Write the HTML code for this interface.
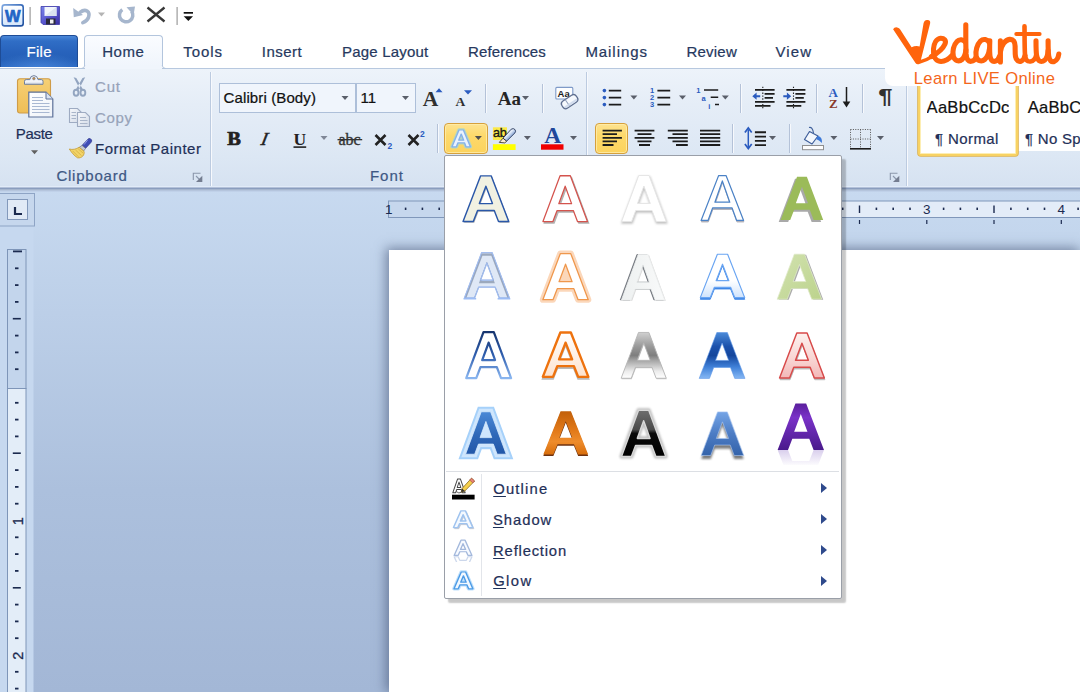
<!DOCTYPE html>
<html>
<head>
<meta charset="utf-8">
<title>Word</title>
<style>
*{box-sizing:border-box;margin:0;padding:0}
html,body{width:1080px;height:692px;overflow:hidden;background:#fff}
body{font-family:"Liberation Sans",sans-serif;font-size:15px;color:#1e2f57;position:relative}
.abs{position:absolute}
.t{position:absolute;white-space:nowrap;font-size:15px;line-height:18px;color:#1f3058;-webkit-text-stroke:.22px currentColor}
.t u{text-decoration-thickness:1.2px;text-underline-offset:2px}
#titlebar{left:0;top:0;width:1080px;height:35px;background:#fff}
#tabrow{left:0;top:35px;width:1080px;height:34px;background:#fff;border-bottom:1px solid #b7c8df}
#filetab{left:0;top:35px;width:78px;height:32px;border-radius:4px 4px 0 0;background:radial-gradient(ellipse 60% 50% at 50% 105%,rgba(90,150,230,.55),rgba(90,150,230,0) 100%),linear-gradient(#4b88d8 0%,#306ec6 16%,#2863bc 50%,#2560b8 75%,#2a68c2 100%);border:1px solid #1e4c96;border-bottom:none}
#hometab{left:84.3px;top:35.2px;width:78.4px;height:31px;border-radius:4px 4px 0 0;background:linear-gradient(#fafcff,#f0f5fc);border:1px solid #b3c5dd;border-bottom:none}
#ribbon{left:0;top:69px;width:1080px;height:118px;background:linear-gradient(#edf3fa 0%,#e5edf7 30%,#dce7f4 75%,#d6e2f1 100%);border-bottom:none}
.gsep{top:72px;width:2px;height:115px;background:linear-gradient(90deg,#bccbe0 0 1px,#f7f9fd 1px 2px)}
.isep{width:2px;height:29px;background:linear-gradient(90deg,#b4c2d8 0 1px,#f7f9fd 1px 2px)}
.dis{color:#8c98ae}
#work{left:0;top:187px;width:1080px;height:505px;background:linear-gradient(#c8daf0 0%,#bccfe8 25%,#acc0dd 60%,#a3b7d6 100%)}
#page{left:389px;top:250px;width:691px;height:442px;background:#fff;box-shadow:-2px -1px 11px 1px rgba(60,75,108,.58)}
#popup{left:444.2px;top:154.6px;width:397.4px;height:444px;background:#fff;border:1px solid #9a9fa8;border-radius:2px;box-shadow:4px 4px 1.6px rgba(0,0,0,.22)}
.arr{left:821px;width:0;height:0;border-left:6px solid #2f4a8c;border-top:5px solid transparent;border-bottom:5px solid transparent}
.combo{top:83px;height:30px;background:#f0f5fc;border:1px solid #adbfd9}
.hot{background:linear-gradient(#fde391 0%,#fdd96b 40%,#fcd35e 100%);border:1.3px solid #d6a03c;border-radius:4px;box-shadow:inset 0 0 0 1px rgba(255,238,170,.8)}
svg{position:absolute;left:0;top:0;overflow:visible}
</style>
</head>
<body>
<div id="titlebar" class="abs"></div>
<div id="tabrow" class="abs"></div>
<div id="ribbon" class="abs"></div>
<div id="filetab" class="abs"></div>
<div id="hometab" class="abs"></div>
<div class="abs" style="left:85.3px;top:66px;width:76.4px;height:3.2px;background:#f0f5fc"></div>
<svg width="1080" height="692" viewBox="0 0 1080 692"><path d="M81.3,68.5 Q84.8,68.5 84.8,65 M162.2,65 Q162.2,68.5 165.7,68.5" fill="none" stroke="#b3c5dd" stroke-width="1"/></svg>

<div class="abs gsep" style="left:210.3px"></div>
<div class="abs gsep" style="left:586.3px"></div>
<div class="abs gsep" style="left:906.3px"></div>

<div class="abs combo" style="left:219px;width:137px"></div>
<div class="abs combo" style="left:356px;width:60px"></div>

<div class="abs isep" style="left:485px;top:84px"></div>
<div class="abs isep" style="left:542px;top:84px"></div>
<div class="abs isep" style="left:437px;top:124px"></div>
<div class="abs isep" style="left:740px;top:84px"></div>
<div class="abs isep" style="left:816px;top:84px"></div>
<div class="abs isep" style="left:862px;top:84px"></div>
<div class="abs isep" style="left:732px;top:124px"></div>
<div class="abs isep" style="left:789px;top:124px"></div>

<div class="abs hot" style="left:444px;top:123px;width:44px;height:31px"></div>
<div class="abs hot" style="left:595.3px;top:123px;width:32.4px;height:31px"></div>

<!-- styles gallery -->
<div class="abs" style="left:918px;top:80px;width:162px;height:71px;background:#fff"></div>
<div class="abs" style="left:918.4px;top:80px;width:99.4px;height:76px;border:2.6px solid #f8d263;border-radius:3px;background:#fff;box-shadow:inset 0 0 0 1px #fdeeb4,0 0 0 .8px #ddb252"></div>

<div id="work" class="abs"></div>
<div id="page" class="abs"></div>
<svg width="1080" height="692" viewBox="0 0 1080 692">
<defs>
<linearGradient id="gW" x1="0" y1="0" x2="0" y2="1"><stop offset="0" stop-color="#ffffff"/><stop offset="1" stop-color="#d4e6fb"/></linearGradient>
<linearGradient id="gSave" x1="0" y1="0" x2="1" y2="1"><stop offset="0" stop-color="#7a86ea"/><stop offset=".5" stop-color="#5a58d0"/><stop offset="1" stop-color="#3a2fa0"/></linearGradient>
<linearGradient id="gBoard" x1="0" y1="0" x2="0" y2="1"><stop offset="0" stop-color="#f6d075"/><stop offset="1" stop-color="#efbe56"/></linearGradient>
<linearGradient id="gPaper" x1="0" y1="0" x2="1" y2="1"><stop offset="0" stop-color="#ffffff"/><stop offset="1" stop-color="#eef2f8"/></linearGradient>
<path id="tri" d="M0,0 L7,0 L3.5,4 Z"/>
<path id="Ag" d="M0,46 L17.5,0 L28.5,0 L46,46 L35,46 L31.2,35 L14.8,35 L11,46 Z M23,11 L16.8,28 L29.2,28 Z" fill-rule="evenodd"/>
<filter id="fGlowS" x="-30%" y="-30%" width="160%" height="160%"><feGaussianBlur stdDeviation="0.9"/></filter>
</defs>

<!-- ===== QAT ===== -->
<g id="qat">
<linearGradient id="gWb" x1="0" y1="0" x2="1" y2="1"><stop offset="0" stop-color="#7fa8e0"/><stop offset=".5" stop-color="#3a6cba"/><stop offset="1" stop-color="#1f4f9e"/></linearGradient>
<rect x="2.2" y="4.9" width="21" height="21" rx="2.5" fill="url(#gW)" stroke="url(#gWb)" stroke-width="1.6"/>
<text x="12.9" y="21.6" font-family="Liberation Sans" font-weight="bold" font-size="16.5" text-anchor="middle" fill="#2265c6" stroke="#2265c6" stroke-width=".7">W</text>
<rect x="29.5" y="7" width="1.2" height="18" fill="#9c9c9c"/>
<!-- save -->
<path d="M41,6.5 H59.5 V24.5 H43 L41,22.5 Z" fill="url(#gSave)" stroke="#3d3aa8" stroke-width=".8"/>
<rect x="44.5" y="7" width="12" height="9" fill="#f2f6fc"/>
<path d="M44.5,16 L56.5,7 V16 Z" fill="#dbe3f0"/>
<rect x="46" y="18.5" width="9.5" height="6" fill="#2a2a3a"/>
<rect x="50" y="19.5" width="3.5" height="4" fill="#f0f0f0"/>
<!-- undo -->
<g fill="none" stroke="#a6b6cd" stroke-width="3.6" stroke-linecap="round">
<path d="M80,12.3 C85.5,8 90.5,11.5 88.5,17.3 C87.6,20 85.5,21.6 82.8,22.6"/>
</g>
<path d="M73.2,8 L73.8,17.3 L83,15 Z" fill="#a6b6cd"/>
<use href="#tri" x="98" y="12.5" fill="#b4b4b4"/>
<!-- redo -->
<path d="M122.3,9.6 A6.7,6.7 0 1 0 131.6,11.2" fill="none" stroke="#a6b6cd" stroke-width="3.5"/>
<path d="M126.5,7.2 L135,6.6 L133.6,15 Z" fill="#a6b6cd"/>
<!-- X -->
<path d="M147.5,7.5 L164.5,21.5 M164.5,7.5 L147.5,21.5" stroke="#383838" stroke-width="2.3" fill="none"/>
<rect x="176.5" y="7" width="1.2" height="18" fill="#9c9c9c"/>
<rect x="183.7" y="12" width="9.3" height="1.7" fill="#111"/>
<path d="M183.7,16.3 H193 L188.35,21 Z" fill="#111"/>
</g>

<!-- ===== Clipboard group ===== -->
<g id="clip">
<rect x="17.5" y="78.7" width="33" height="34.3" rx="2.5" fill="url(#gBoard)" stroke="#cf9c48" stroke-width="1.1"/>
<path d="M24.5,84.3 V81.3 Q24.5,79.6 26.2,79.6 H29.8 Q30.3,75.6 33.9,75.6 Q37.5,75.6 38,79.6 H41.3 Q43,79.6 43,81.3 V84.3 Z" fill="#f1f3f7" stroke="#6f7f9c" stroke-width="1"/>
<circle cx="33.9" cy="78.6" r="1.3" fill="#c98a3c" stroke="#6f7f9c" stroke-width=".6"/>
<path d="M25.5,83.3 H42" stroke="#b9c2d2" stroke-width="1"/>
<path d="M28.8,92.2 H46 L52.8,99 V117 H28.8 Z" fill="url(#gPaper)" stroke="#5d7199" stroke-width="1.2"/>
<path d="M46,92.2 V99 H52.8" fill="#d9e2f0" stroke="#5d7199" stroke-width="1"/>
<g stroke="#a9b8d2" stroke-width="1"><path d="M32,97.5H43M32,100.5H43M32,103.5H49.5M32,106.5H49.5M32,109.5H49.5M32,112.5H49.5"/></g>
<use href="#tri" x="31" y="150.3" fill="#606060"/>
<!-- scissors -->
<path d="M73.6,77.2 L76.3,78 L83,89.6 L80.6,90.6 Z M85.2,77.2 L82.5,78 L75.8,89.6 L78.2,90.6 Z" fill="#93a5c0"/>
<g fill="none" stroke="#93a5c0" stroke-width="1.9">
<ellipse cx="76.1" cy="92.7" rx="2.4" ry="3"/>
<ellipse cx="82.9" cy="92.7" rx="2.4" ry="3"/>
</g>
<!-- copy -->
<linearGradient id="gCopy" x1="0" y1="0" x2="1" y2="1"><stop offset="0" stop-color="#f6f8fb"/><stop offset="1" stop-color="#d3dbe8"/></linearGradient>
<g stroke="#9eabc2" stroke-width="1.1" fill="url(#gCopy)">
<path d="M69.5,108.5 H77.5 L81.5,112.5 V122.5 H69.5 Z"/>
<path d="M77.5,112.5 H85.5 L89.5,116.5 V126.5 H77.5 Z"/>
</g>
<g stroke="#a9b5c9" stroke-width="1"><path d="M71.5,112.5H76M71.5,115.5H76M71.5,118.5H76M80,117.5H86M80,120.5H87.5M80,123.5H87.5"/></g>
<!-- brush -->
<path d="M88.6,138.6 Q90.6,138 91.6,140 Q92,141.4 91,142.4 L85.6,148.3 L82,145.4 Z" fill="#3f4db6" stroke="#2c3588" stroke-width=".7"/>
<path d="M87.6,140.2 L84,144.6" stroke="#8f9ae6" stroke-width="1"/>
<path d="M82,145.4 L85.6,148.4 L83.6,151 L79.2,147.4 Z" fill="#c3c8d2" stroke="#6f7684" stroke-width=".7"/>
<path d="M79.2,147.2 L84,151.3 C85,154.5 82,158.6 77.5,157.8 C74,155.5 71.5,152.5 69.3,149 C72.5,150 76.3,149.2 79.2,147.2 Z" fill="#f2d468" stroke="#c49a34" stroke-width=".8"/>
<path d="M72.5,150.8 L78.5,156.8 M75.5,150 L81.5,155.6 M78.2,148.8 L83.2,153.2" stroke="#d4ae44" stroke-width=".8" fill="none"/>
<!-- launcher -->
<g stroke="#8a96ab" stroke-width="1.1" fill="none"><path d="M193.3,180 V173.2 H200.5"/><path d="M196,176 L200,180"/></g>
<path d="M202.3,175.8 V182 H196 Z" fill="#747d90"/>
</g>
<!-- ===== Font group ===== -->
<g id="fontg">
<use href="#tri" x="341.5" y="96" fill="#5a5f6a"/>
<use href="#tri" x="402" y="96" fill="#5a5f6a"/>
<text x="422.8" y="106" font-family="Liberation Serif" font-weight="bold" font-size="21.5" fill="#303030">A</text>
<path d="M435.5,92.3 L442.5,92.3 L439,88.3 Z" fill="#2b5cc0"/>
<text x="455.4" y="106" font-family="Liberation Serif" font-weight="bold" font-size="13.5" fill="#303030">A</text>
<path d="M464,90.3 L472,90.3 L468,94.5 Z" fill="#2b5cc0"/>
<text x="497.8" y="104.8" font-family="Liberation Serif" font-weight="bold" font-size="19" fill="#262626">Aa</text>
<use href="#tri" x="522" y="96" fill="#5a5f6a"/>
<!-- clear formatting -->
<rect x="555.8" y="87.4" width="17" height="11.6" rx="1" fill="#fdfeff" stroke="#7f9ac8" stroke-width="1.1"/>
<text x="557.6" y="97" font-family="Liberation Sans" font-weight="bold" font-size="9.5" fill="#1c1c1c">Aa</text>
<g transform="translate(569.6,101.6) rotate(-34)"><rect x="-8.6" y="-4.2" width="17.2" height="8.4" rx="3.4" fill="#f6f9fd" stroke="#5f6f90" stroke-width="1.3"/><path d="M-2.5,-4 V4" stroke="#8f9db8" stroke-width="1"/><rect x="-7.6" y="1.2" width="15.2" height="2.2" rx="1" fill="#c9d6ea" opacity=".8"/></g>

<text x="227.3" y="144.6" font-family="Liberation Serif" font-weight="bold" font-size="18.5" fill="#222" stroke="#222" stroke-width=".7" textLength="13.6" lengthAdjust="spacingAndGlyphs">B</text>
<text transform="translate(260.3,144.6) skewX(-12)" font-family="Liberation Serif" font-style="italic" font-size="18.5" fill="#222" stroke="#222" stroke-width=".5">I</text>
<text x="293.5" y="144.5" font-family="Liberation Serif" font-weight="bold" font-size="17.5" fill="#222">U</text>
<rect x="293.5" y="146.3" width="12.7" height="1.6" fill="#222"/>
<use href="#tri" x="320.5" y="136" fill="#7f8797"/>
<text x="338.5" y="144.6" font-family="Liberation Serif" font-size="16" fill="#333" stroke="#333" stroke-width=".35">abc</text>
<rect x="337.5" y="139" width="24.7" height="1.3" fill="#333"/>
<path d="M375.5,135 L385.5,145 M385.5,135 L375.5,145" stroke="#222" stroke-width="2.6" fill="none"/>
<text x="387.5" y="149" font-family="Liberation Sans" font-weight="bold" font-size="8.5" fill="#2b5cc0">2</text>
<path d="M408.5,135 L418.5,145 M418.5,135 L408.5,145" stroke="#222" stroke-width="2.6" fill="none"/>
<text x="420" y="137" font-family="Liberation Sans" font-weight="bold" font-size="8.5" fill="#2b5cc0">2</text>

<!-- text effects A (in hot button) -->
<g transform="translate(452,130) scale(0.4,0.365)">
<use href="#Ag" fill="none" stroke="#b5d6c0" stroke-width="9" stroke-linejoin="round" filter="url(#fGlowS)"/>
<use href="#Ag" fill="#eaf2fd" stroke="#86b1ea" stroke-width="3.4" stroke-linejoin="round"/>
</g>
<use href="#tri" x="474.9" y="136" fill="#4f4f4f"/>

<!-- highlight -->
<rect x="492.9" y="127.3" width="14.1" height="12.7" fill="#fbe94a"/>
<text x="493" y="137" font-family="Liberation Sans" font-size="12.6" fill="#161616" stroke="#161616" stroke-width=".35" letter-spacing="-.2">ab</text>
<linearGradient id="gPen" x1="0" y1="0" x2="1" y2="1"><stop offset="0" stop-color="#ffffff"/><stop offset=".45" stop-color="#dfe9f7"/><stop offset=".7" stop-color="#6f93cc"/><stop offset="1" stop-color="#2f4f8c"/></linearGradient>
<path d="M511.2,129.2 Q513.3,127.8 515,129.6 Q516.3,131.4 514.8,133 L506.6,141.2 L503,138.2 Z" fill="url(#gPen)" stroke="#2a3a5c" stroke-width=".9"/>
<path d="M503,138.2 L506.6,141.2 L504.8,142.9 L499.3,142.4 Z" fill="#f8ecd2" stroke="#2a2418" stroke-width=".8"/>
<rect x="492.9" y="144.2" width="22.7" height="5.8" fill="#ffff00"/>
<use href="#tri" x="523.9" y="136" fill="#5a5f6a"/>
<!-- font colour -->
<text x="544.3" y="142.8" font-family="Liberation Serif" font-weight="bold" font-size="23.5" fill="#20479a">A</text>
<rect x="541" y="144.3" width="22.5" height="5.4" fill="#f00000"/>
<use href="#tri" x="570" y="136" fill="#5a5f6a"/>
</g>

<!-- ===== Paragraph group ===== -->
<g id="parag">
<!-- bullets -->
<g fill="#2a5bbf"><circle cx="604.4" cy="90.6" r="1.8"/><circle cx="604.4" cy="97.6" r="1.8"/><circle cx="604.4" cy="104.6" r="1.8"/></g>
<g stroke="#1c1c1c" stroke-width="1.9"><path d="M608.8,90.6H621.2M608.8,97.6H621.2M608.8,104.6H621.2"/></g>
<use href="#tri" x="630.4" y="95.6" fill="#5a5f6a"/>
<!-- numbering -->
<g font-family="Liberation Sans" font-weight="bold" font-size="7.5" fill="#2a5bbf"><text x="650" y="93.3">1</text><text x="650" y="100.3">2</text><text x="650" y="107.3">3</text></g>
<g stroke="#1c1c1c" stroke-width="1.9"><path d="M657.4,90.6H670.2M657.4,97.6H670.2M657.4,104.6H670.2"/></g>
<use href="#tri" x="679" y="95.6" fill="#5a5f6a"/>
<!-- multilevel -->
<g font-family="Liberation Sans" font-weight="bold" font-size="7.5" fill="#2a5bbf"><text x="696.2" y="93">1</text><text x="701.4" y="100.6">a</text><text x="708.2" y="108.6">i</text></g>
<g stroke="#1c1c1c" stroke-width="1.6"><path d="M704,90H718.2M710.7,97.3H718.2M715,104.5H719"/></g>
<use href="#tri" x="721.8" y="95.6" fill="#5a5f6a"/>
<!-- decrease indent -->
<g stroke="#1c1c1c" stroke-width="1.7"><path d="M755,89.8H774.6M764.6,93.8H774.6M764.6,97.8H773M755,101.8H774.6M755,105.8H770.5"/></g>
<path d="M762.8,86.7 V108.3" stroke="#222" stroke-width="1.1" stroke-dasharray="1.4,1.5"/>
<path d="M752.3,96.2 L756.6,92.6 V95.2 H760.2 V97.2 H756.6 V99.8 Z" fill="#2a5bbf"/>
<!-- increase indent -->
<g stroke="#1c1c1c" stroke-width="1.7"><path d="M786.4,89.8H805.4M795.4,93.8H805.4M795.4,97.8H803.8M786.4,101.8H805.4M786.4,105.8H801.3"/></g>
<path d="M793.5,86.7 V108.3" stroke="#222" stroke-width="1.1" stroke-dasharray="1.4,1.5"/>
<path d="M791.2,96.2 L786.9,92.6 V95.2 H783.3 V97.2 H786.9 V99.8 Z" fill="#2a5bbf"/>
<!-- sort -->
<text x="828.5" y="96.5" font-family="Liberation Serif" font-weight="bold" font-size="13" fill="#2a5bbf">A</text>
<text x="829" y="107.5" font-family="Liberation Serif" font-weight="bold" font-size="13" fill="#8a3a2a">Z</text>
<path d="M846.5,87 V103" stroke="#1c1c1c" stroke-width="1.5"/>
<path d="M842.7,101.5 H850.3 L846.5,107.5 Z" fill="#1c1c1c"/>
<!-- pilcrow -->
<text x="878.3" y="103.4" font-family="Liberation Sans" font-weight="bold" font-size="20.5" fill="#303030" textLength="14.3" lengthAdjust="spacingAndGlyphs">¶</text>

<!-- align left -->
<g stroke="#1c1c1c" stroke-width="1.8"><path d="M602.6,130.6H621.9M602.6,134.2H617M602.6,137.8H621.9M602.6,141.4H617M602.6,145.0H613.5"/></g>
<g stroke="#1c1c1c" stroke-width="1.8"><path d="M634.6,130.6H654.4M637.5,134.2H651.5M634.6,137.8H654.4M637.5,141.4H651.5M639,145.0H650"/></g>
<g stroke="#1c1c1c" stroke-width="1.8"><path d="M667.8,130.6H687.8M672.5,134.2H687.8M667.8,137.8H687.8M672.5,141.4H687.8M676,145.0H687.8"/></g>
<g stroke="#1c1c1c" stroke-width="1.8"><path d="M700,130.6H720.2M700,134.2H720.2M700,137.8H720.2M700,141.4H720.2M700,145.0H720.2"/></g>
<!-- line spacing -->
<path d="M748.3,129.5 V147" stroke="#2a5bbf" stroke-width="1.5"/>
<path d="M744.9,132.6 L748.3,128 L751.7,132.6 M744.9,144 L748.3,148.6 L751.7,144" fill="none" stroke="#2a5bbf" stroke-width="1.7"/>
<g stroke="#1c1c1c" stroke-width="1.9"><path d="M754.9,132.3H766M754.9,136.6H766M754.9,140.9H766M754.9,145.1H766"/></g>
<use href="#tri" x="769" y="136" fill="#5a5f6a"/>
<!-- shading bucket -->
<path d="M809.5,131.5 L818,136 L812,144 L804.5,139.5 Z" fill="#f4f8fd" stroke="#3f5f9a" stroke-width="1.2" stroke-linejoin="round"/>
<path d="M809,127.5 Q812.5,126.5 813.5,133" fill="none" stroke="#3f5f9a" stroke-width="1.1"/>
<path d="M818,136 Q822.5,137 822,143 Q819,140 816,139 Z" fill="#3b78d8"/>
<rect x="802.5" y="145.5" width="21" height="4.2" fill="#fdfdfd" stroke="#8f8f8f" stroke-width="1"/>
<use href="#tri" x="830.4" y="136" fill="#5a5f6a"/>
<!-- borders -->
<g stroke="#555" stroke-width="1" stroke-dasharray="1,1.4" fill="none"><path d="M850.5,129.5H870.5M850.5,129.5V148M870.5,129.5V148M860.5,129.5V148M850.5,139H870.5"/></g>
<path d="M850,148.8H871" stroke="#1c1c1c" stroke-width="1.6"/>
<use href="#tri" x="877" y="136" fill="#5a5f6a"/>
<!-- launcher -->
<g stroke="#8a96ab" stroke-width="1.1" fill="none"><path d="M890.3,180 V173.2 H897.5"/><path d="M893,176 L897,180"/></g>
<path d="M899.3,175.8 V182 H893 Z" fill="#747d90"/>
</g>
</svg>
<svg width="1080" height="692" viewBox="0 0 1080 692">
<rect x="0" y="186" width="1080" height="1" fill="#e1ebf8"/><rect x="0" y="187" width="1080" height="1" fill="#b3c1d9"/><rect x="0" y="188" width="1080" height="1" fill="#8a9dbe"/><rect x="0" y="189" width="1080" height="1" fill="#a6b6ce"/><rect x="0" y="190" width="1080" height="1" fill="#b5c5dd"/><rect x="0" y="191" width="1080" height="1" fill="#c0d1e9"/>
<rect x="0" y="192" width="33.5" height="500" fill="#c6d8ef"/>
<rect x="-1" y="193.5" width="35.5" height="32.5" fill="#c6d7ed" stroke="#8ea4c5" stroke-width="1"/>
<rect x="7.5" y="199.5" width="20" height="20" fill="#e1eaf6" stroke="#8399bb" stroke-width="1"/>
<path d="M15,207 V214 H22" fill="none" stroke="#1b2a4f" stroke-width="2.2"/>
<rect x="388.5" y="201" width="134.8" height="16.5" fill="#c6d7ed" stroke="#8097ba" stroke-width="1"/>
<rect x="523.3" y="201" width="561.7" height="16.5" fill="#e3ecf8" stroke="#8097ba" stroke-width="1"/>
<text x="388.8" y="214.2" font-family="Liberation Sans" font-size="13.5" text-anchor="middle" fill="#1b2a4f">1</text>
<rect x="404.8" y="207.6" width="1.6" height="2.4" fill="#1b2a4f"/>
<rect x="421.6" y="207.6" width="1.6" height="2.4" fill="#1b2a4f"/>
<rect x="438.4" y="207.6" width="1.6" height="2.4" fill="#1b2a4f"/>
<rect x="455.4" y="205.5" width="1.4" height="7.5" fill="#1b2a4f"/>
<rect x="472.1" y="207.6" width="1.6" height="2.4" fill="#1b2a4f"/>
<rect x="488.9" y="207.6" width="1.6" height="2.4" fill="#1b2a4f"/>
<rect x="505.7" y="207.6" width="1.6" height="2.4" fill="#1b2a4f"/>
<rect x="539.3" y="207.6" width="1.6" height="2.4" fill="#1b2a4f"/>
<rect x="556.1" y="207.6" width="1.6" height="2.4" fill="#1b2a4f"/>
<rect x="572.9" y="207.6" width="1.6" height="2.4" fill="#1b2a4f"/>
<rect x="589.8" y="205.5" width="1.4" height="7.5" fill="#1b2a4f"/>
<rect x="606.6" y="207.6" width="1.6" height="2.4" fill="#1b2a4f"/>
<rect x="623.4" y="207.6" width="1.6" height="2.4" fill="#1b2a4f"/>
<rect x="640.2" y="207.6" width="1.6" height="2.4" fill="#1b2a4f"/>
<text x="657.8" y="214.2" font-family="Liberation Sans" font-size="13.5" text-anchor="middle" fill="#1b2a4f">1</text>
<rect x="673.8" y="207.6" width="1.6" height="2.4" fill="#1b2a4f"/>
<rect x="690.6" y="207.6" width="1.6" height="2.4" fill="#1b2a4f"/>
<rect x="707.4" y="207.6" width="1.6" height="2.4" fill="#1b2a4f"/>
<rect x="724.3" y="205.5" width="1.4" height="7.5" fill="#1b2a4f"/>
<rect x="741.1" y="207.6" width="1.6" height="2.4" fill="#1b2a4f"/>
<rect x="757.9" y="207.6" width="1.6" height="2.4" fill="#1b2a4f"/>
<rect x="774.7" y="207.6" width="1.6" height="2.4" fill="#1b2a4f"/>
<text x="792.3" y="214.2" font-family="Liberation Sans" font-size="13.5" text-anchor="middle" fill="#1b2a4f">2</text>
<rect x="808.3" y="207.6" width="1.6" height="2.4" fill="#1b2a4f"/>
<rect x="825.1" y="207.6" width="1.6" height="2.4" fill="#1b2a4f"/>
<rect x="841.9" y="207.6" width="1.6" height="2.4" fill="#1b2a4f"/>
<rect x="858.8" y="205.5" width="1.4" height="7.5" fill="#1b2a4f"/>
<rect x="875.6" y="207.6" width="1.6" height="2.4" fill="#1b2a4f"/>
<rect x="892.4" y="207.6" width="1.6" height="2.4" fill="#1b2a4f"/>
<rect x="909.2" y="207.6" width="1.6" height="2.4" fill="#1b2a4f"/>
<text x="926.8" y="214.2" font-family="Liberation Sans" font-size="13.5" text-anchor="middle" fill="#1b2a4f">3</text>
<rect x="942.8" y="207.6" width="1.6" height="2.4" fill="#1b2a4f"/>
<rect x="959.6" y="207.6" width="1.6" height="2.4" fill="#1b2a4f"/>
<rect x="976.4" y="207.6" width="1.6" height="2.4" fill="#1b2a4f"/>
<rect x="993.3" y="205.5" width="1.4" height="7.5" fill="#1b2a4f"/>
<rect x="1010.1" y="207.6" width="1.6" height="2.4" fill="#1b2a4f"/>
<rect x="1026.9" y="207.6" width="1.6" height="2.4" fill="#1b2a4f"/>
<rect x="1043.7" y="207.6" width="1.6" height="2.4" fill="#1b2a4f"/>
<text x="1061.3" y="214.2" font-family="Liberation Sans" font-size="13.5" text-anchor="middle" fill="#1b2a4f">4</text>
<rect x="1077.3" y="207.6" width="1.6" height="2.4" fill="#1b2a4f"/>
<rect x="589.9" y="220" width="1.2" height="4" fill="#1b2a4f"/>
<rect x="657.2" y="220" width="1.2" height="4" fill="#1b2a4f"/>
<rect x="724.4" y="220" width="1.2" height="4" fill="#1b2a4f"/>
<rect x="791.7" y="220" width="1.2" height="4" fill="#1b2a4f"/>
<rect x="858.9" y="220" width="1.2" height="4" fill="#1b2a4f"/>
<rect x="926.2" y="220" width="1.2" height="4" fill="#1b2a4f"/>
<rect x="993.4" y="220" width="1.2" height="4" fill="#1b2a4f"/>
<rect x="1060.7" y="220" width="1.2" height="4" fill="#1b2a4f"/>
<rect x="7.5" y="249.5" width="18.5" height="139" fill="#c3d5ec" stroke="#7e95b8" stroke-width="1"/>
<rect x="7.5" y="388.5" width="18.5" height="400" fill="#e3edf8" stroke="#7e95b8" stroke-width="1"/>
<rect x="13" y="250.5" width="9" height="1.8" fill="#1b2a4f"/>
<rect x="15" y="267.4" width="3.5" height="1.8" fill="#1b2a4f"/>
<rect x="15" y="284.2" width="3.5" height="1.8" fill="#1b2a4f"/>
<rect x="15" y="301.0" width="3.5" height="1.8" fill="#1b2a4f"/>
<rect x="12.8" y="317.9" width="8" height="1.6" fill="#1b2a4f"/>
<rect x="15" y="334.7" width="3.5" height="1.8" fill="#1b2a4f"/>
<rect x="15" y="351.5" width="3.5" height="1.8" fill="#1b2a4f"/>
<rect x="15" y="368.3" width="3.5" height="1.8" fill="#1b2a4f"/>
<rect x="15" y="401.9" width="3.5" height="1.8" fill="#1b2a4f"/>
<rect x="15" y="418.7" width="3.5" height="1.8" fill="#1b2a4f"/>
<rect x="15" y="435.5" width="3.5" height="1.8" fill="#1b2a4f"/>
<rect x="12.8" y="452.4" width="8" height="1.6" fill="#1b2a4f"/>
<rect x="15" y="469.2" width="3.5" height="1.8" fill="#1b2a4f"/>
<rect x="15" y="486.0" width="3.5" height="1.8" fill="#1b2a4f"/>
<rect x="15" y="502.8" width="3.5" height="1.8" fill="#1b2a4f"/>
<text transform="translate(22.8,521.3) rotate(-90)" font-family="Liberation Sans" font-size="14.5" text-anchor="middle" fill="#1b2a4f" stroke="#1b2a4f" stroke-width=".3">1</text>
<rect x="15" y="536.4" width="3.5" height="1.8" fill="#1b2a4f"/>
<rect x="15" y="553.2" width="3.5" height="1.8" fill="#1b2a4f"/>
<rect x="15" y="570.0" width="3.5" height="1.8" fill="#1b2a4f"/>
<rect x="12.8" y="587.0" width="8" height="1.6" fill="#1b2a4f"/>
<rect x="15" y="603.7" width="3.5" height="1.8" fill="#1b2a4f"/>
<rect x="15" y="620.5" width="3.5" height="1.8" fill="#1b2a4f"/>
<rect x="15" y="637.3" width="3.5" height="1.8" fill="#1b2a4f"/>
<text transform="translate(22.8,655.8) rotate(-90)" font-family="Liberation Sans" font-size="14.5" text-anchor="middle" fill="#1b2a4f" stroke="#1b2a4f" stroke-width=".3">2</text>
<rect x="15" y="670.9" width="3.5" height="1.8" fill="#1b2a4f"/>
<rect x="15" y="687.7" width="3.5" height="1.8" fill="#1b2a4f"/>
<rect x="15" y="704.5" width="3.5" height="1.8" fill="#1b2a4f"/>
</svg>
<div class="abs" style="left:885px;top:0;width:195px;height:86px;background:#fff;border-radius:0 0 0 8px"></div>
<svg width="1080" height="692" viewBox="0 0 1080 692">
<g fill="none" stroke="#ff640c" stroke-width="5.1" stroke-linecap="round" stroke-linejoin="round">
<!-- V -->
<path d="M893.1,29.3 Q894.5,26.8 897.2,27.4 Q899.4,28 900.2,29.6 L911.6,47.3 Q915.5,45.3 919.6,46.4 L923.6,23 Q924.6,19.6 927.6,20 Q930.8,20.4 930.1,23.5 L920.9,59.8 Q927,58 932.2,54.6 L934,57.5 Q927,62 918.6,64.2 Q916.5,64.6 915.5,63 Z" fill="#ff640c" stroke="none"/>
<!-- e -->
<path d="M931.5,56.5 C937,53.5 943,48.5 945,44 C946.5,40.5 944,38 940.5,38.2 C936.5,38.6 934,43.5 933.5,49 C933,55.5 935,60.5 939.5,61.3 C944,62 948.5,59.5 952.5,55"/>
<!-- d -->
<path d="M965.3,42 C963.5,39.5 959.5,38.6 957,41.5 C953.5,45 952.2,51.5 953.3,56 C954.5,61 959,62.2 962,59.5 C964.5,57.3 965.6,53.5 965.9,50"/>
<path d="M965.8,24.8 C965.8,34 965.7,46 966.1,54 C966.5,59.5 968.3,61.6 971.2,61.3 C973.6,61 975,59.6 975.8,57.6"/>
<!-- a -->
<path d="M989.2,42.5 C987.5,39.5 983.5,38.2 980.5,41 C977,44.5 975.3,51 976.1,56 C977,61 981.5,62.3 984.7,59.5 C987.5,57 988.9,53 989.4,49"/>
<path d="M989.8,40.9 C989.6,46 989.5,51 989.9,55.5 C990.4,60 992.3,61.8 995,61.3 C997.4,60.8 998.8,58.6 999.6,56"/>
<!-- n -->
<path d="M1000.4,40.9 L1000.4,62"/>
<path d="M1000.6,51 C1001.5,45.5 1005,40 1009.5,39.4 C1013.5,39 1015,42 1015.1,46 C1015.2,50 1015,53.5 1015.5,56.5 C1016.2,60.5 1018.5,61.9 1021,61.2 C1023.3,60.5 1024.3,58.5 1025,55.5"/>
<!-- t -->
<path d="M1024.5,26.2 C1024.6,36 1024.5,47 1025,55 C1025.5,60 1027.5,61.8 1030.5,61.5 C1033.8,61.1 1035.5,58.5 1036.2,55" stroke-width="4.6"/>
<path d="M1016.3,33.9 L1039.6,33.9" stroke-width="4"/>
<!-- u -->
<path d="M1036,40.9 C1036,46 1036,51.5 1036.6,55.5 C1037.4,60.5 1040,62.3 1043,61.2 C1046.5,59.8 1047.8,55 1048,50.5"/>
<path d="M1048.1,40.9 C1048.1,46 1048.1,51.5 1048.7,55.8 C1049.5,60.8 1051.5,62.5 1054.3,61.5 C1057,60.4 1058.3,57.5 1058.8,54"/>
</g>
</svg>
<div id="popup" class="abs"></div>
<svg width="1080" height="692" viewBox="0 0 1080 692">
<defs>
<path id="A" d="M0,46 L17.7,0 L28.3,0 L46,46 L35.7,46 L31.4,35 L14.6,35 L10.3,46 Z M23,10.5 L16.4,28 L29.6,28 Z" fill-rule="evenodd"/>
<path id="AL" d="M0,46 L19,0 L27,0 L46,46 L38.5,46 L33.55,33.2 L12.45,33.2 L7.5,46 Z M23,5.5 L14.94,27.3 L31.06,27.3 Z" fill-rule="evenodd"/>
<clipPath id="cA"><use href="#A" clip-rule="evenodd"/></clipPath>
<filter id="b05" x="-30%" y="-30%" width="160%" height="160%"><feGaussianBlur stdDeviation="0.5"/></filter>
<filter id="b08" x="-30%" y="-30%" width="160%" height="160%"><feGaussianBlur stdDeviation="0.8"/></filter>
<filter id="b12" x="-30%" y="-30%" width="160%" height="160%"><feGaussianBlur stdDeviation="1.2"/></filter>
<filter id="b18" x="-30%" y="-30%" width="160%" height="160%"><feGaussianBlur stdDeviation="1.8"/></filter>
<linearGradient id="g31s" x1="0" y1="0" x2="0" y2="1"><stop offset="0" stop-color="#17356f"/><stop offset=".5" stop-color="#2f5eae"/><stop offset="1" stop-color="#8ab6f0"/></linearGradient>
<linearGradient id="g32" x1="0" y1="0" x2="0" y2="1"><stop offset="0" stop-color="#ffffff"/><stop offset="1" stop-color="#fde3cf"/></linearGradient>
<linearGradient id="g33" x1="0" y1="0" x2="0" y2="1"><stop offset="0" stop-color="#d0d0d0"/><stop offset=".3" stop-color="#9a9a9a"/><stop offset=".5" stop-color="#7e7e7e"/><stop offset=".62" stop-color="#a8a8a8"/><stop offset=".85" stop-color="#ececec"/><stop offset="1" stop-color="#ffffff"/></linearGradient>
<linearGradient id="g34" x1="0" y1="0" x2="0" y2="1"><stop offset="0" stop-color="#4a8ad8"/><stop offset=".3" stop-color="#1c52ac"/><stop offset=".5" stop-color="#14469c"/><stop offset=".75" stop-color="#3f80d8"/><stop offset="1" stop-color="#86b8f4"/></linearGradient>
<linearGradient id="g35" x1="0" y1="0" x2="0" y2="1"><stop offset="0" stop-color="#fdf1ee"/><stop offset=".6" stop-color="#f8d4d2"/><stop offset="1" stop-color="#f3b8b8"/></linearGradient>
<linearGradient id="g41" x1="0" y1="0" x2="0" y2="1"><stop offset="0" stop-color="#4a88d6"/><stop offset=".55" stop-color="#2f68b8"/><stop offset="1" stop-color="#2257a8"/></linearGradient>
<linearGradient id="g42" x1="0" y1="0" x2="0" y2="1"><stop offset="0" stop-color="#c2600a"/><stop offset=".45" stop-color="#e27a1a"/><stop offset=".7" stop-color="#ee8c2c"/><stop offset="1" stop-color="#d86e0c"/></linearGradient>
<linearGradient id="g43" x1="0" y1="0" x2="0" y2="1"><stop offset="0" stop-color="#6e6e6e"/><stop offset=".42" stop-color="#4a4a4a"/><stop offset=".5" stop-color="#0a0a0a"/><stop offset="1" stop-color="#000000"/></linearGradient>
<linearGradient id="g44" x1="0" y1="0" x2="0" y2="1"><stop offset="0" stop-color="#74a4e6"/><stop offset=".5" stop-color="#4c7cc4"/><stop offset="1" stop-color="#3463aa"/></linearGradient>
<linearGradient id="g45" x1="0" y1="0" x2="0" y2="1"><stop offset="0" stop-color="#5a1f9c"/><stop offset=".3" stop-color="#7a32c8"/><stop offset="1" stop-color="#4a1a8c"/></linearGradient>
<linearGradient id="g45r" x1="0" y1="0" x2="0" y2="1"><stop offset="0" stop-color="#bfaee0" stop-opacity="0.05"/><stop offset="1" stop-color="#bfaee0" stop-opacity=".6"/></linearGradient>
<linearGradient id="g24" x1="0" y1="0" x2="0" y2="1"><stop offset="0" stop-color="#ffffff"/><stop offset=".6" stop-color="#ffffff"/><stop offset="1" stop-color="#cfe3fc"/></linearGradient>
<linearGradient id="g25" x1="0" y1="0" x2="1" y2="1"><stop offset="0" stop-color="#d2e2b0"/><stop offset="1" stop-color="#bcd38c"/></linearGradient>
<linearGradient id="g23" x1="0" y1="0" x2="1" y2="0"><stop offset="0" stop-color="#edf0f0"/><stop offset="1" stop-color="#f9fafa"/></linearGradient>
</defs>
<g transform="translate(463.05,175.85) scale(0.9935,0.9913)"><use href="#A" transform="translate(1,1.2)" fill="#555" opacity=".45" filter="url(#b08)"/><use href="#A" fill="#f1f1e2" stroke="#2a57a8" stroke-width="1.45" stroke-linejoin="round"/></g>
<g transform="translate(542.95,175.75) scale(0.9674,0.9957)"><use href="#A" transform="translate(1.3,1.5)" fill="#555" stroke="#555" stroke-width="1.2" opacity=".45" filter="url(#b08)"/><use href="#A" fill="#fff" stroke="#d4534d" stroke-width="1.3" stroke-linejoin="round"/></g>
<g transform="translate(621.60,175.50) scale(0.9696,1.0000)"><use href="#A" transform="translate(0.5,1.5)" fill="#777" stroke="#777" stroke-width="1.5" opacity=".45" filter="url(#b12)"/><use href="#A" fill="#fff" stroke="#e6e6e6" stroke-width="1" stroke-linejoin="round"/></g>
<g transform="translate(701.10,175.60) scale(0.9239,0.9739)"><use href="#AL" transform="translate(0.3,1.6)" fill="#667" stroke="#667" stroke-width="1" opacity=".5" filter="url(#b08)"/><use href="#AL" fill="#fff" stroke="#4b82c6" stroke-width="1.3" stroke-linejoin="round"/></g>
<g transform="translate(780.70,176.80) scale(0.9239,0.9413)"><use href="#A" transform="translate(-2.2,2)" fill="#555" opacity=".5" filter="url(#b08)"/><use href="#A" fill="#9bbb59"/></g>
<g transform="translate(464.50,252.60) scale(0.9739,0.9848)"><use href="#A" fill="#dfe8f6" stroke="#a3bdee" stroke-width="1.4" stroke-linejoin="round"/><g clip-path="url(#cA)"><use href="#A" transform="translate(0,2)" fill="none" stroke="#6f7f98" stroke-width="2.2" filter="url(#b08)" opacity=".6"/></g><use href="#A" fill="none" stroke="#a3bdee" stroke-width="1" stroke-linejoin="round"/><path d="M-1,46.8 H12 M34,46.8 H47" stroke="#9cbcf5" stroke-width="1.6"/></g>
<g transform="translate(542.85,253.65) scale(0.9870,1.0000)"><use href="#A" fill="#fbd7ba" stroke="#fbd7ba" stroke-width="6.2" stroke-linejoin="round" filter="url(#b05)"/><path d="M23,10.5 L16.4,28 L29.6,28 Z" fill="#fbd7ba"/><use href="#A" fill="#fff" stroke="#ef974c" stroke-width="1.3" stroke-linejoin="round"/></g>
<g transform="translate(621.40,254.50) scale(0.9413,0.9870)"><use href="#A" transform="translate(1.2,0.8)" fill="#999" opacity=".35" filter="url(#b08)"/><use href="#A" transform="translate(-1.2,0)" fill="#5b6068" stroke="#5b6068" stroke-width=".6"/><use href="#A" fill="url(#g23)" stroke="#eceeee" stroke-width=".8"/></g>
<g transform="translate(700.30,254.30) scale(0.9652,0.9413)"><use href="#A" transform="translate(0,1.8)" fill="#3f86e6" stroke="#3f86e6" stroke-width="1"/><use href="#A" fill="url(#g24)" stroke="#6aa5f2" stroke-width="1.2" stroke-linejoin="round"/></g>
<g transform="translate(777.20,254.20) scale(0.9674,0.9783)"><use href="#A" transform="translate(1.6,0.6)" fill="#666" opacity=".55" filter="url(#b05)"/><use href="#A" fill="url(#g25)" stroke="#dfe9c8" stroke-width=".8"/></g>
<g transform="translate(466.25,332.05) scale(0.9739,1.0022)"><use href="#A" fill="#fff" stroke="url(#g31s)" stroke-width="2.3" stroke-linejoin="round"/></g>
<g transform="translate(542.80,332.50) scale(0.9913,0.9630)"><use href="#A" transform="translate(0,2)" fill="#666" stroke="#666" stroke-width="2" opacity=".45" filter="url(#b08)"/><use href="#A" fill="url(#g32)" stroke="#ee720e" stroke-width="2.4" stroke-linejoin="round"/></g>
<g transform="translate(621.15,332.45) scale(0.9804,0.9957)"><use href="#A" transform="translate(0.5,1)" fill="#777" opacity=".4" filter="url(#b08)"/><use href="#A" fill="url(#g33)" stroke="#b4b4b4" stroke-width=".9" stroke-linejoin="round"/></g>
<g transform="translate(699.20,332.50) scale(0.9957,0.9978)"><use href="#A" fill="url(#g34)" stroke="#5d96e6" stroke-width=".6"/></g>
<g transform="translate(779.55,332.95) scale(0.9739,0.9783)"><use href="#A" transform="translate(0.5,1.8)" fill="#666" stroke="#666" stroke-width="1" opacity=".45" filter="url(#b08)"/><use href="#A" fill="url(#g35)" stroke="#d84a4a" stroke-width="1.5" stroke-linejoin="round"/></g>
<g transform="translate(465.55,411.75) scale(0.8848,0.9239)"><use href="#A" fill="#a6d1fa" stroke="#a6d1fa" stroke-width="11" stroke-linejoin="miter" stroke-miterlimit="3" filter="url(#b05)"/><use href="#A" fill="#cfe6fd" stroke="#cfe6fd" stroke-width="6.5" stroke-linejoin="miter" stroke-miterlimit="3" filter="url(#b05)"/><path d="M23,10.5 L16.4,28 L29.6,28 Z" fill="#cfe6fd"/><use href="#A" fill="url(#g41)" stroke="#d6eafd" stroke-width=".9"/></g>
<g transform="translate(543.30,411.30) scale(0.9761,0.9413)"><use href="#A" transform="translate(0,1.6)" fill="#6e3210"/><use href="#A" fill="url(#g42)"/></g>
<g transform="translate(621.50,410.20) scale(0.9630,1.0065)"><use href="#A" fill="#888" stroke="#888" stroke-width="4" stroke-linejoin="round" opacity=".55" filter="url(#b12)"/><use href="#A" fill="url(#g43)" stroke="#d8d8d8" stroke-width="1.5" stroke-linejoin="round"/></g>
<g transform="translate(701.20,411.90) scale(0.9239,0.9478)"><use href="#A" transform="translate(0,3.8)" fill="#444" opacity=".7" filter="url(#b12)"/><use href="#A" fill="url(#g44)" stroke="#a9c6f2" stroke-width=".7"/></g>
<g transform="translate(777.60,403.50) scale(1.0087,1.0087)"><g transform="translate(0,92) scale(1,-1)"><g clip-path="url(#cA)"><rect x="-2" y="31" width="50" height="15" fill="url(#g45r)"/></g></g><use href="#A" fill="url(#g45)"/></g>
<rect x="446" y="471" width="393" height="1" fill="#dcdfe4"/>
<rect x="481" y="474" width="1" height="122" fill="#e2e5ea"/>
</svg>
<div class="abs arr" style="top:482.8px"></div>
<div class="abs arr" style="top:513.8px"></div>
<div class="abs arr" style="top:545px"></div>
<div class="abs arr" style="top:575.7px"></div>
<svg width="1080" height="692" viewBox="0 0 1080 692">
<!-- outline -->
<g transform="translate(452.8,479) scale(0.27,0.3)"><use href="#A" fill="#fff" stroke="#444" stroke-width="3.4" stroke-linejoin="round"/></g>
<path d="M471.5,478.2 L474.6,481 L464.8,491 L461.2,492.3 L462,488.6 Z" fill="#f6d04c" stroke="#8a6a20" stroke-width=".8"/>
<path d="M471.5,478.2 L474.6,481 L472.8,482.9 L469.7,480 Z" fill="#e8837a" stroke="#9a4a40" stroke-width=".6"/>
<path d="M462,488.6 L464.8,491 L461.2,492.3 Z" fill="#333"/>
<path d="M456,491.5 Q459,494 461.5,492.2" fill="none" stroke="#555" stroke-width=".9"/>
<rect x="452" y="494.7" width="22.6" height="4.8" fill="#000"/>
<!-- shadow -->
<g transform="translate(453.5,510.8) scale(0.42,0.365)">
<use href="#A" transform="translate(2.5,3)" fill="#8a94a8" stroke="#8a94a8" stroke-width="2" opacity=".5" filter="url(#b12)"/>
<use href="#A" fill="#f4f9ff" stroke="#9fc3ef" stroke-width="3.6" stroke-linejoin="round"/>
</g>
<!-- reflection -->
<g transform="translate(454.2,540.2) scale(0.385,0.33)">
<use href="#A" fill="#f7faff" stroke="#a3b8dc" stroke-width="3.6" stroke-linejoin="round"/>
<g transform="translate(0,96) scale(1,-1)" opacity=".55"><g clip-path="url(#cRefl)"><use href="#A" fill="none" stroke="#a3b8dc" stroke-width="3.4" stroke-linejoin="round"/></g></g>
</g>
<clipPath id="cRefl"><rect x="-4" y="30" width="54" height="20"/></clipPath>
<!-- glow -->
<g transform="translate(454,572) scale(0.41,0.365)">
<use href="#A" fill="#bfe0fb" stroke="#bfe0fb" stroke-width="9" stroke-linejoin="round" filter="url(#b12)"/>
<use href="#A" fill="#f2f9ff" stroke="#4d9be6" stroke-width="3.4" stroke-linejoin="round"/>
</g>
</svg>
<div class="t" style="left:26.59px;top:43.2px;font-size:15px;line-height:18px;letter-spacing:0.246px;color:#fff">File</div>
<div class="t" style="left:102.16px;top:43.2px;font-size:15px;line-height:18px;letter-spacing:0.599px;color:#26385e">Home</div>
<div class="t" style="left:183.33px;top:43.2px;font-size:15px;line-height:18px;letter-spacing:0.892px;color:#26385e">Tools</div>
<div class="t" style="left:261.8px;top:43.2px;font-size:15px;line-height:18px;letter-spacing:0.488px;color:#26385e">Insert</div>
<div class="t" style="left:342.06px;top:43.2px;font-size:15px;line-height:18px;letter-spacing:0.186px;color:#26385e">Page Layout</div>
<div class="t" style="left:468.03px;top:43.2px;font-size:15px;line-height:18px;letter-spacing:0.118px;color:#26385e">References</div>
<div class="t" style="left:585.44px;top:43.2px;font-size:15px;line-height:18px;letter-spacing:0.922px;color:#26385e">Mailings</div>
<div class="t" style="left:686.45px;top:43.2px;font-size:15px;line-height:18px;letter-spacing:0.231px;color:#26385e">Review</div>
<div class="t" style="left:775.49px;top:43.2px;font-size:15px;line-height:18px;letter-spacing:1.112px;color:#26385e">View</div>
<div class="t" style="left:15.83px;top:125.2px;font-size:15px;line-height:18px;letter-spacing:-0.306px;color:#1f3058">Paste</div>
<div class="t" style="left:95.11px;top:77.8px;font-size:15px;line-height:18px;letter-spacing:0.769px;color:#97a3b9">Cut</div>
<div class="t" style="left:95.11px;top:108.9px;font-size:15px;line-height:18px;letter-spacing:0.599px;color:#97a3b9">Copy</div>
<div class="t" style="left:95.05px;top:139.5px;font-size:15px;line-height:18px;letter-spacing:0.515px;color:#1f3058">Format Painter</div>
<div class="t" style="left:56.4px;top:167.4px;font-size:15px;line-height:18px;letter-spacing:0.784px;color:#3e5884">Clipboard</div>
<div class="t" style="left:369.92px;top:167.1px;font-size:15px;line-height:18px;letter-spacing:0.991px;color:#3e5884">Font</div>
<div class="t" style="left:223.51px;top:89.1px;font-size:15px;line-height:18px;letter-spacing:0.123px;color:#111">Calibri (Body)</div>
<div class="t" style="left:360.39px;top:89.1px;font-size:15px;line-height:18px;letter-spacing:0.08px;color:#111">11</div>
<div class="t" style="left:926.6px;top:97.55px;font-size:16.6px;line-height:20px;letter-spacing:0.235px;color:#111;overflow:hidden;width:82.2px">AaBbCcDc</div>
<div class="t" style="left:1027.78px;top:97.55px;font-size:16.6px;line-height:20px;letter-spacing:0.235px;color:#111">AaBbCcDc</div>
<div class="t" style="left:935.0px;top:129.5px;font-size:15px;line-height:18px;letter-spacing:0.411px;color:#1f3058">¶ Normal</div>
<div class="t" style="left:1024.99px;top:129.5px;font-size:15px;line-height:18px;letter-spacing:0.3px;color:#1f3058">¶ No Spacing</div>
<div class="t" style="left:913.74px;top:68.65px;font-size:16.6px;line-height:20px;letter-spacing:0.349px;color:#f4661b;-webkit-text-stroke:0">Learn LIVE Online</div>
<div class="t" style="left:493.22px;top:479.77px;font-size:14.8px;line-height:18px;letter-spacing:1.168px;color:#1f3058"><u>O</u>utline</div>
<div class="t" style="left:492.94px;top:510.67px;font-size:14.8px;line-height:18px;letter-spacing:0.971px;color:#1f3058"><u>S</u>hadow</div>
<div class="t" style="left:493.11px;top:541.67px;font-size:14.8px;line-height:18px;letter-spacing:0.799px;color:#1f3058"><u>R</u>eflection</div>
<div class="t" style="left:493.18px;top:572.17px;font-size:14.8px;line-height:18px;letter-spacing:1.402px;color:#1f3058"><u>G</u>low</div>
</body>
</html>
